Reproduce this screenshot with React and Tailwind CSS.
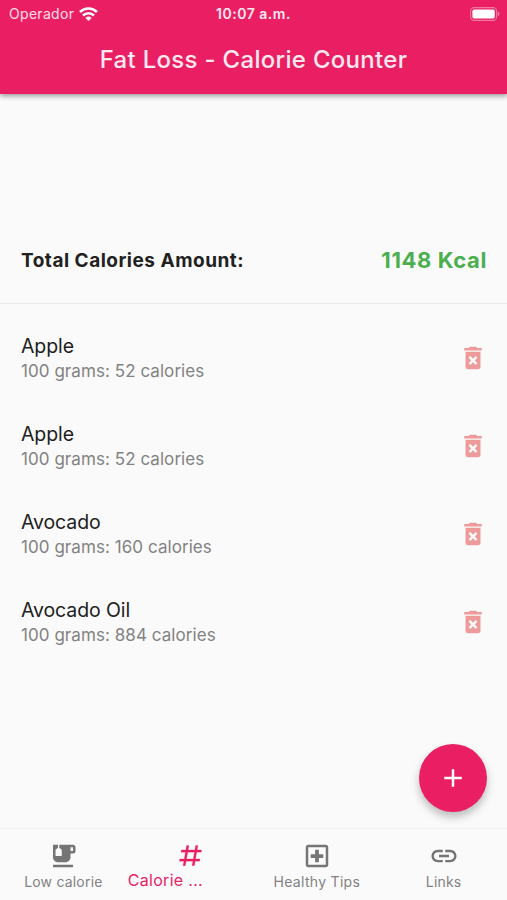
import React from "react";
import {
  MdAdd,
  MdDeleteForever,
  MdEmojiFoodBeverage,
  MdLink,
  MdOutlineLocalHospital,
} from "react-icons/md";

const foods = [
  { id: 1, name: "Apple", calories: 52 },
  { id: 2, name: "Apple", calories: 52 },
  { id: 3, name: "Avocado", calories: 160 },
  { id: 4, name: "Avocado Oil", calories: 884 },
];

const WifiIcon = () => (
  <svg className="w-[19px] h-[14px]" viewBox="0 0 19 14" fill="none" stroke="currentColor" strokeWidth="2.6">
    <path d="M1 5a12.2 12.2 0 0 1 17 0" />
    <path d="M4 8.5a7.9 7.9 0 0 1 11 0" />
    <path d="M9.5 14 6.4 10.9a4.5 4.5 0 0 1 6.2 0z" fill="currentColor" stroke="none" />
  </svg>
);

const BatteryIcon = () => (
  <svg className="w-[30px] h-[14px]" viewBox="0 0 30 14" fill="none">
    <rect x="0.6" y="0.6" width="26" height="12.8" rx="3.6" stroke="white" strokeOpacity="0.4" strokeWidth="1.1" />
    <rect x="2.4" y="2.4" width="22.4" height="9.2" rx="1.8" fill="white" />
    <path d="M27.8 4.8c2 .6 2 3.8 0 4.4z" fill="white" fillOpacity="0.5" />
  </svg>
);

const PoundIcon = () => (
  <svg className="w-[27px] h-[27px]" viewBox="0 0 24 24" fill="currentColor" stroke="currentColor" strokeWidth="0.2">
    <path d="M5.41 21l.71-4h-4l.35-2h4l1.06-6h-4l.35-2h4l.71-4h2l-.71 4h6l.71-4h2l-.71 4h4l-.35 2h-4l-1.06 6h4l-.35 2h-4l-.71 4h-2l.71-4h-6l-.71 4h-2M9.53 9l-1.06 6h6l1.06-6h-6z" />
  </svg>
);

const Header = () => (
  <header className="relative h-[94px] bg-[#e91e63] text-white shadow-[0_2px_5px_rgba(0,0,0,0.4)]">
    <div className="grid grid-cols-3 items-center h-[27px] pl-[9px] pr-[7px]">
      <div className="flex items-center gap-[5px] text-white/85">
        <span className="text-[14px] tracking-[0.3px]">Operador</span>
        <span className="text-white"><WifiIcon /></span>
      </div>
      <span className="-ml-[2px] text-center text-[14px] font-semibold tracking-[0.5px] whitespace-nowrap text-white/90">10:07 a.m.</span>
      <div className="flex justify-end"><BatteryIcon /></div>
    </div>
    <h1 className="mt-[15px] text-center text-[24px] leading-9 font-medium tracking-[0.3px] whitespace-nowrap text-white/90">
      Fat Loss - Calorie Counter
    </h1>
  </header>
);

const FoodRow = ({ food }) => (
  <li className="flex items-center justify-between h-[88px] pl-[21px] pr-[19px]">
    <div>
      <p className="text-[19.5px] leading-[26px] tracking-[-0.1px] text-[#212121]">{food.name}</p>
      <p className="text-[17px] leading-6 tracking-[0.06px] text-[#828282]">100 grams: {food.calories} calories</p>
    </div>
    <MdDeleteForever className="size-[30px] text-[#ef9a9a]" />
  </li>
);

const BottomNav = () => (
  <nav className="grid grid-cols-4 h-[72px] border-t border-[#f4f4f4] bg-[#fafafa] text-[#757575] text-[14px] leading-5 tracking-[0.2px]">
    <div className="flex flex-col items-center pt-3">
      <MdEmojiFoodBeverage className="size-[30px]" />
      <span className="mt-px text-[#828282]">Low calorie</span>
    </div>
    <div className="flex flex-col pt-[13px] pl-[1px] text-[#e91e63]">
      <div className="flex justify-center"><PoundIcon /></div>
      <span className="mt-px text-[16px] tracking-[0.3px] whitespace-nowrap">Calorie ...</span>
    </div>
    <div className="flex flex-col items-center pt-3">
      <MdOutlineLocalHospital className="size-[30px]" />
      <span className="mt-px tracking-[0.3px] whitespace-nowrap text-[#828282]">Healthy Tips</span>
    </div>
    <div className="flex flex-col items-center pt-3">
      <MdLink className="size-[30px]" />
      <span className="mt-px text-[#828282]">Links</span>
    </div>
  </nav>
);

const App = () => {
  const total = foods.reduce((sum, food) => sum + food.calories, 0);

  return (
    <div className="relative flex flex-col h-screen overflow-hidden bg-[#fafafa] font-['Inter',sans-serif]">
      <Header />
      <main className="flex-1 pt-[122px]">
        <div className="flex items-center justify-between h-[88px] pt-[3px] px-[21px] border-b border-[#e8e8e8]">
          <span className="text-[19px] font-bold tracking-[0.5px] text-[#212121]">Total Calories Amount:</span>
          <span className="-mr-px mb-[2px] text-[22px] font-bold tracking-[0.6px] text-[#4caf50]">{total} Kcal</span>
        </div>
        <ul className="pt-[10px]">
          {foods.map((food) => (
            <FoodRow key={food.id} food={food} />
          ))}
        </ul>
      </main>

      {/* add button */}
      <button className="absolute right-[20px] bottom-[88px] size-[68px] rounded-full bg-[#e91e63] text-white flex items-center justify-center shadow-[0_5px_8px_rgba(0,0,0,0.25)]">
        <MdAdd className="size-[30px]" />
      </button>

      <BottomNav />
    </div>
  );
};

export default App;
